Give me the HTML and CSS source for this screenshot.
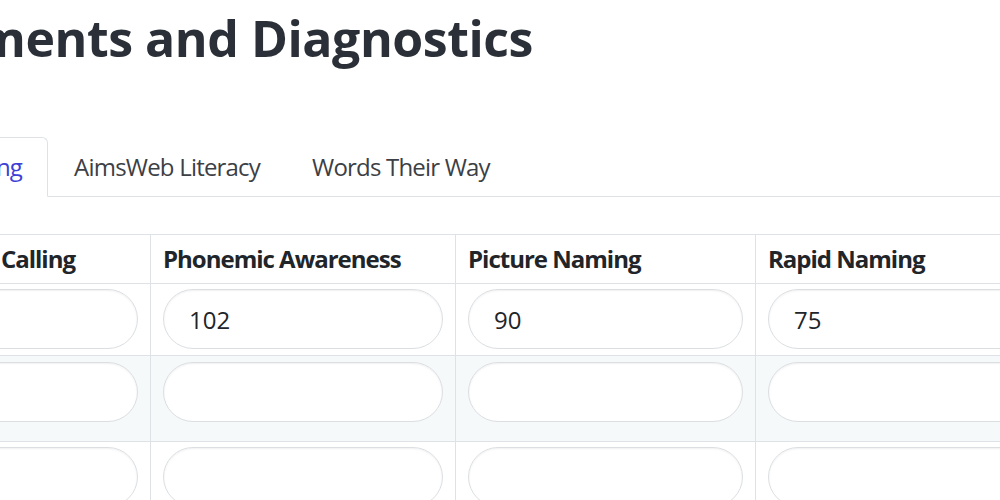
FILE: index.html
```html
<!DOCTYPE html>
<html lang="en">
<head>
<meta charset="utf-8">
<title>Assessments and Diagnostics</title>
<link rel="stylesheet" href="styles.css">
</head>
<body>
<main class="page">
  <h1 class="page-title">Assessments and Diagnostics</h1>

  <ul class="nav-tabs">
    <li><a class="nav-link active" href="#">Benchmarking</a></li>
    <li><a class="nav-link" href="#">AimsWeb Literacy</a></li>
    <li><a class="nav-link" href="#">Words Their Way</a></li>
  </ul>

  <table class="score-table">
    <colgroup>
      <col class="col-a">
      <col class="col-b">
      <col class="col-c">
      <col class="col-d">
    </colgroup>
    <thead>
      <tr>
        <th>Sight Word Calling</th>
        <th>Phonemic Awareness</th>
        <th>Picture Naming</th>
        <th>Rapid Naming</th>
      </tr>
    </thead>
    <tbody>
      <tr>
        <td><input class="pill-input" type="text" value=""></td>
        <td><input class="pill-input" type="text" value="102"></td>
        <td><input class="pill-input" type="text" value="90"></td>
        <td><input class="pill-input" type="text" value="75"></td>
      </tr>
      <tr class="row-striped row-tall">
        <td><input class="pill-input" type="text" value=""></td>
        <td><input class="pill-input" type="text" value=""></td>
        <td><input class="pill-input" type="text" value=""></td>
        <td><input class="pill-input" type="text" value=""></td>
      </tr>
      <tr>
        <td><input class="pill-input" type="text" value=""></td>
        <td><input class="pill-input" type="text" value=""></td>
        <td><input class="pill-input" type="text" value=""></td>
        <td><input class="pill-input" type="text" value=""></td>
      </tr>
    </tbody>
  </table>
</main>
</body>
</html>
```

FILE: styles.css
```css
html, body {
  margin: 0;
  padding: 0;
  background: #ffffff;
  overflow: hidden;
}

body {
  width: 1000px;
  height: 500px;
  font-family: "Open Sans", "Noto Sans", sans-serif;
  font-size: 24px;
  color: #212529;
}

.page {
  margin-left: -155px;
  padding-top: 8px;
  width: 1400px;
}

.page-title {
  margin: 0 0 0 -29px;
  font-size: 50px;
  line-height: 60px;
  font-weight: 700;
  letter-spacing: -0.45px;
  color: #2b3038;
  white-space: nowrap;
}

.nav-tabs {
  list-style: none;
  margin: 69px 0 0 -1px;
  padding: 0;
  display: flex;
  border-bottom: 1px solid #dee2e6;
}

.nav-link {
  display: block;
  padding: 10px 25px;
  line-height: 38px;
  letter-spacing: -0.8px;
  border: 1px solid transparent;
  border-radius: 6px 6px 0 0;
  margin-bottom: -1px;
  color: #3c4045;
  text-decoration: none;
  white-space: nowrap;
}

.nav-link.active {
  color: #3d3fd6;
  background: #ffffff;
  border-color: #dee2e6 #dee2e6 #ffffff;
}

.score-table {
  margin: 37px 0 0 17px;
  border-collapse: collapse;
  table-layout: fixed;
  width: 1198px;
}

.col-a { width: 288px; }
.col-b { width: 305px; }
.col-c { width: 300px; }
.col-d { width: 305px; }

.score-table th,
.score-table td {
  border: 1px solid #dee2e6;
  padding: 5px 12px 6px;
  text-align: left;
  vertical-align: top;
}

.score-table th {
  font-weight: 700;
  line-height: 37px;
  letter-spacing: -1px;
  color: #212529;
  white-space: nowrap;
}

.row-striped td {
  background: #f5f9fa;
}

.row-tall td {
  padding-top: 6px;
  padding-bottom: 19px;
}

.pill-input {
  display: block;
  box-sizing: border-box;
  width: 100%;
  height: 60px;
  margin: 0;
  padding: 0 25px;
  border: 1px solid #dcdfe2;
  border-radius: 30px;
  background: #ffffff;
  box-shadow: inset 0 1px 2px rgba(0, 0, 0, 0.06);
  font-family: "Open Sans", "Noto Sans", sans-serif;
  font-size: 24px;
  color: #212529;
  outline: none;
}
```
